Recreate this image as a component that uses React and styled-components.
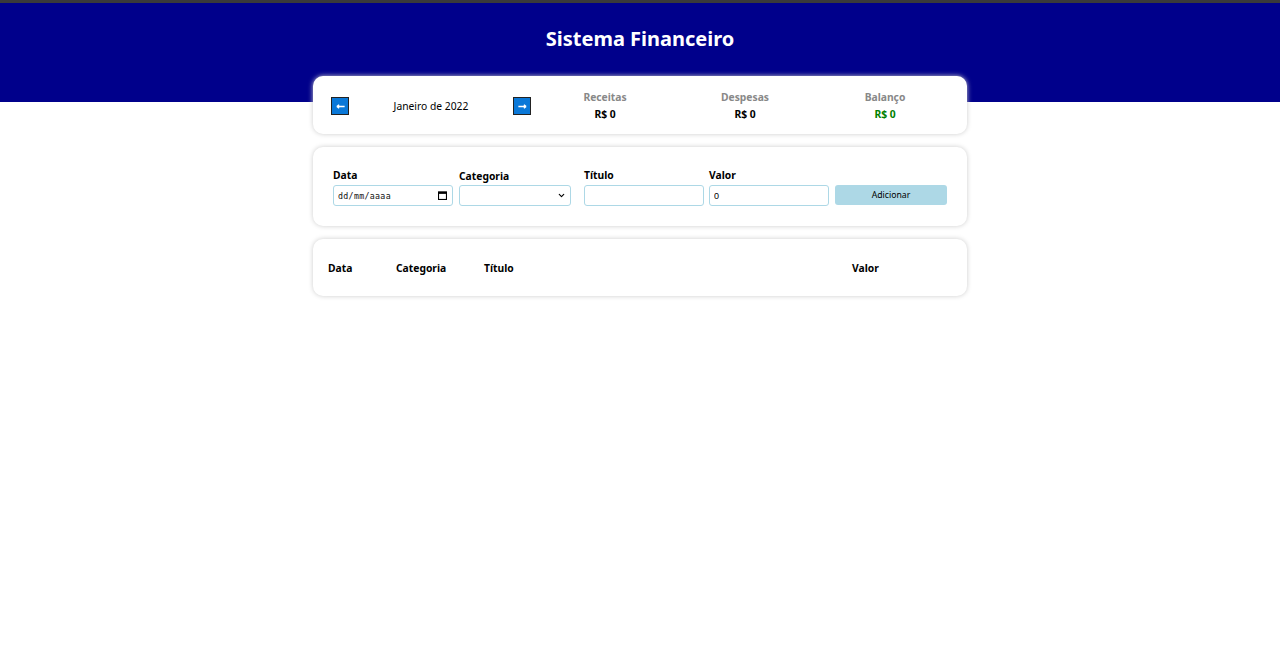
import React, { useState } from "react";
import styled, { createGlobalStyle } from "styled-components";
import { ChevronDown } from "lucide-react";

const GlobalStyle = createGlobalStyle`
	body {
		margin: 0;
		background: #fff;
		font-family: "Noto Sans", "Open Sans", sans-serif;
		font-size: 10.3px;
		color: #000;
	}
`;

const months = ["Janeiro", "Fevereiro", "Março", "Abril", "Maio", "Junho", "Julho", "Agosto", "Setembro", "Outubro", "Novembro", "Dezembro"];

function App() {
	const [month, setMonth] = useState(0);
	const [year, setYear] = useState(2022);

	const prev = () => {
		if (month === 0) {
			setMonth(11);
			setYear(year - 1);
		} else setMonth(month - 1);
	};
	const next = () => {
		if (month === 11) {
			setMonth(0);
			setYear(year + 1);
		} else setMonth(month + 1);
	};

	return (
		<Page>
			<GlobalStyle />
			<Header>
				<h1>Sistema Financeiro</h1>
			</Header>
			<Body>
				<Card>
					<InfoRow>
						<MonthArea>
							<ArrowButton onClick={prev}>
								<svg viewBox="0 0 12 12" width="11" height="11">
									<path d="M2 6h8.5M2 6l2.5-2M2 6l2.5 2" stroke="#fff" strokeWidth="1.4" fill="none" />
								</svg>
							</ArrowButton>
							<MonthTitle>
								{months[month]} de {year}
							</MonthTitle>
							<ArrowButton onClick={next}>
								<svg viewBox="0 0 12 12" width="11" height="11">
									<path d="M1.5 6H10M10 6L7.5 4M10 6L7.5 8" stroke="#fff" strokeWidth="1.4" fill="none" />
								</svg>
							</ArrowButton>
						</MonthArea>
						<Resume>
							<ResumeItem>
								<ResumeTitle>Receitas</ResumeTitle>
								<ResumeValue>R$ 0</ResumeValue>
							</ResumeItem>
							<ResumeItem>
								<ResumeTitle>Despesas</ResumeTitle>
								<ResumeValue>R$ 0</ResumeValue>
							</ResumeItem>
							<ResumeItem>
								<ResumeTitle>Balanço</ResumeTitle>
								<ResumeValue color="green">R$ 0</ResumeValue>
							</ResumeItem>
						</Resume>
					</InfoRow>
				</Card>

				<Card pad="20px">
					<InputArea>
						<InputLabel>
							<InputTitle>Data</InputTitle>
							<FieldBox>
								<Input type="text" placeholder="dd/mm/aaaa" className="date" />
								<CalendarIcon viewBox="0 0 10 10">
									<rect x="0.6" y="1" width="8.8" height="8.4" fill="none" stroke="#000" strokeWidth="1.2" />
									<rect x="0.6" y="1" width="8.8" height="2.2" fill="#000" />
								</CalendarIcon>
							</FieldBox>
						</InputLabel>
						<InputLabel>
							<InputTitle low>Categoria</InputTitle>
							<FieldBox>
								<Select>
									<option></option>
									<option>Alimentação</option>
									<option>Aluguel</option>
									<option>Salário</option>
								</Select>
								<SelectChevron size={9} strokeWidth={3} />
							</FieldBox>
						</InputLabel>
						<InputLabel>
							<InputTitle>Título</InputTitle>
							<Input type="text" />
						</InputLabel>
						<InputLabel>
							<InputTitle>Valor</InputTitle>
							<Input type="number" defaultValue={0} />
						</InputLabel>
						<InputLabel>
							<InputTitle>&nbsp;</InputTitle>
							<AddButton>Adicionar</AddButton>
						</InputLabel>
					</InputArea>
				</Card>

				<Card pad="15px">
					<Table>
						<thead>
							<tr>
								<TableHead width="68px">Data</TableHead>
								<TableHead width="88px">Categoria</TableHead>
								<TableHead>Título</TableHead>
								<TableHead width="100px">Valor</TableHead>
							</tr>
						</thead>
						<tbody></tbody>
					</Table>
				</Card>
			</Body>
		</Page>
	);
}

const Page = styled.div`
	min-height: 648px;
`;

const Header = styled.header`
	height: 99px;
	border-top: 3px solid #3a3a3a;
	background-color: #00008b;
	text-align: center;

	h1 {
		margin: 0;
		padding-top: 22px;
		color: #fff;
		font-size: 20px;
		line-height: 28px;
		font-weight: 700;
	}
`;

const Body = styled.main`
	width: 654px;
	margin: -26px auto 0 auto;
	display: flex;
	flex-direction: column;
	gap: 13px;
`;

const Card = styled.section`
	background-color: #fff;
	border-radius: 10px;
	box-shadow: 0 0 5px #ccc;
	padding: ${(p) => p.pad || "13px 12px 11px 18px"};
`;

const InfoRow = styled.div`
	display: flex;
	align-items: center;
	gap: 4px;
`;

const MonthArea = styled.div`
	width: 200px;
	display: flex;
	align-items: center;
`;

const ArrowButton = styled.button`
	width: 18px;
	height: 18px;
	padding: 0;
	box-sizing: border-box;
	border: 1.5px solid #222;
	background-color: #0a78d8;
	display: flex;
	align-items: center;
	justify-content: center;
	cursor: pointer;
`;

const MonthTitle = styled.div`
	flex: 1;
	text-align: center;
`;

const Resume = styled.div`
	flex: 1;
	display: flex;
`;

const ResumeItem = styled.div`
	flex: 1;
	text-align: center;
`;

const ResumeTitle = styled.div`
	color: #888;
	font-weight: 700;
	line-height: 17px;
`;

const ResumeValue = styled.div`
	color: ${(p) => p.color || "#000"};
	font-weight: 700;
	line-height: 17px;
`;

const InputArea = styled.div`
	display: grid;
	grid-template-columns: 126px 125px 125px 126px 1fr;
	align-items: end;
`;

const InputLabel = styled.label`
	display: flex;
	flex-direction: column;
`;

const InputTitle = styled.div`
	font-weight: 700;
	line-height: 16px;
	margin-bottom: 2px;
	transform: ${(p) => (p.low ? "translateY(1px)" : "none")};
`;

const FieldBox = styled.div`
	position: relative;
	width: fit-content;
`;

const Input = styled.input`
	box-sizing: border-box;
	width: 120px;
	height: 21px;
	padding: 0 4px;
	border: 1px solid #add8e6;
	border-radius: 3px;
	font-family: "Liberation Sans", Arial, sans-serif;
	font-size: 9px;
	outline: none;

	&.date {
		letter-spacing: 0.3px;
		font-family: "DejaVu Sans Mono", monospace;
		font-size: 8.3px;
	}
	&.date::placeholder {
		color: #111;
	}
	&::-webkit-inner-spin-button {
		display: none;
	}
`;

const CalendarIcon = styled.svg`
	position: absolute;
	right: 6px;
	top: 6px;
	width: 9px;
	height: 9px;
`;

const Select = styled.select`
	box-sizing: border-box;
	width: 112px;
	height: 21px;
	padding: 0 4px;
	appearance: none;
	border: 1px solid #add8e6;
	border-radius: 3px;
	background: #fff;
	font-family: "Liberation Sans", Arial, sans-serif;
	font-size: 9px;
	outline: none;
`;

const SelectChevron = styled(ChevronDown)`
	position: absolute;
	right: 5px;
	top: 6px;
	pointer-events: none;
	color: #000;
`;

const AddButton = styled.button`
	width: 112px;
	height: 20px;
	border: none;
	border-radius: 3px;
	background-color: lightblue;
	color: #000;
	font-family: "Noto Sans", sans-serif;
	font-size: 8.7px;
	cursor: pointer;
	margin-bottom: 1px;
`;

const Table = styled.table`
	width: 100%;
	border-collapse: collapse;
`;

const TableHead = styled.th`
	width: ${(p) => p.width || "auto"};
	text-align: left;
	padding: 5px 0;
	height: 27px;
	box-sizing: border-box;
	font-weight: 700;
`;

export default App;
